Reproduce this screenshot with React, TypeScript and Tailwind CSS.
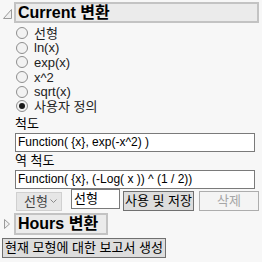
import React from 'react'

const font = { fontFamily: '"Liberation Sans", "Noto Sans CJK KR", sans-serif' }

const options = ['선형', 'ln(x)', 'exp(x)', 'x^2', 'sqrt(x)', '사용자 정의']

function Radio({ checked }: { checked?: boolean }) {
  return (
    <span className="w-[12px] h-[12px] rounded-full border border-[#8e8e8e] bg-[#f2f2f2] flex items-center justify-center shrink-0">
      {checked && <span className="w-[6px] h-[6px] rounded-full bg-[#1a1a1a]" />}
    </span>
  )
}

export default function App() {
  return (
    <div
      className="w-[262px] h-[262px] bg-[#f7f7f7] text-[#000] overflow-hidden pt-[2px]"
      style={font}
    >
      {/* Current header */}
      <div className="flex items-center">
        <svg width="14" height="21" viewBox="0 0 14 21" className="shrink-0">
          <path d="M11.5 7.5 L11.5 16.5 L3.5 16.5 Z" fill="#f0f0f0" stroke="#9a9a9a" strokeWidth="1" />
        </svg>
        <div className="flex-1 mr-[3px] h-[21px] border-2 border-[#c3c3c3] bg-[#ebebeb] flex items-center pl-[2px] text-[16px] font-bold leading-none">
          Current 변환
        </div>
      </div>

      {/* radios */}
      <div className="pl-[16px] mt-[3px]">
        {options.map((o, i) => (
          <div key={o} className="flex items-center gap-[6px] h-[14.6px] text-[13px] leading-none text-[#222]">
            <Radio checked={i === 5} />
            <span>{o}</span>
          </div>
        ))}
      </div>

      <div className="pl-[15px] pr-[7px] mt-[3px] text-[13px] leading-none">
        <div className="h-[14px] flex items-center">척도</div>
        <div className="mt-[2px] h-[19px] border border-[#7a7a7a] bg-white flex items-center pl-[2px] text-[12px] whitespace-nowrap">
          Function( {'{x}'}, exp(-x^2) )
        </div>
        <div className="mt-[2px] h-[14px] flex items-center">역 척도</div>
        <div className="mt-[2px] h-[19px] border border-[#7a7a7a] bg-white flex items-center pl-[2px] text-[12px] whitespace-nowrap">
          Function( {'{x}'}, (-Log( x )) ^ (1 / 2))
        </div>
      </div>

      {/* controls */}
      <div className="flex items-start pl-[16px] h-[22px] text-[13px] leading-none">
        <div className="w-[46px] h-[19px] mt-[3px] border border-[#d0d0d0] bg-[#e6e6e6] flex items-center justify-between pl-[7px] pr-[4px] text-[#444]">
          <span>선형</span>
          <svg width="7" height="5" viewBox="0 0 7 5">
            <path d="M0.5 0.5 L3.5 3.5 L6.5 0.5" fill="none" stroke="#8a8a8a" strokeWidth="1" />
          </svg>
        </div>
        <div className="ml-[9px] w-[49px] h-[20px] border border-[#7a7a7a] bg-white flex items-center pl-[2px]">
          선형
        </div>
        <div className="ml-[3px] w-[71px] h-[20px] mt-[2px] border border-[#707070] bg-[#dddddd] flex items-center justify-center">
          사용 및 저장
        </div>
        <div className="ml-[5px] w-[60px] h-[20px] mt-[2px] border border-[#adadad] bg-[#f4f4f4] flex items-center justify-center text-[#a6a6a6]">
          삭제
        </div>
      </div>

      {/* Hours header */}
      <div className="flex items-center mt-[2px]">
        <svg width="14" height="22" viewBox="0 0 14 22" className="shrink-0">
          <path d="M4.5 6.5 L9.5 11 L4.5 15.5 Z" fill="#f0f0f0" stroke="#9a9a9a" strokeWidth="1" />
        </svg>
        <div className="h-[22px] border-2 border-[#c3c3c3] bg-[#ebebeb] flex items-center pl-[2px] pr-[8px] text-[16px] font-bold leading-none">
          Hours 변환
        </div>
      </div>

      <div className="ml-[2px] mt-[3px] w-[164px] h-[20px] border border-[#707070] bg-[#dddddd] flex items-center justify-center text-[13px] leading-none">
        현재 모형에 대한 보고서 생성
      </div>
    </div>
  )
}
